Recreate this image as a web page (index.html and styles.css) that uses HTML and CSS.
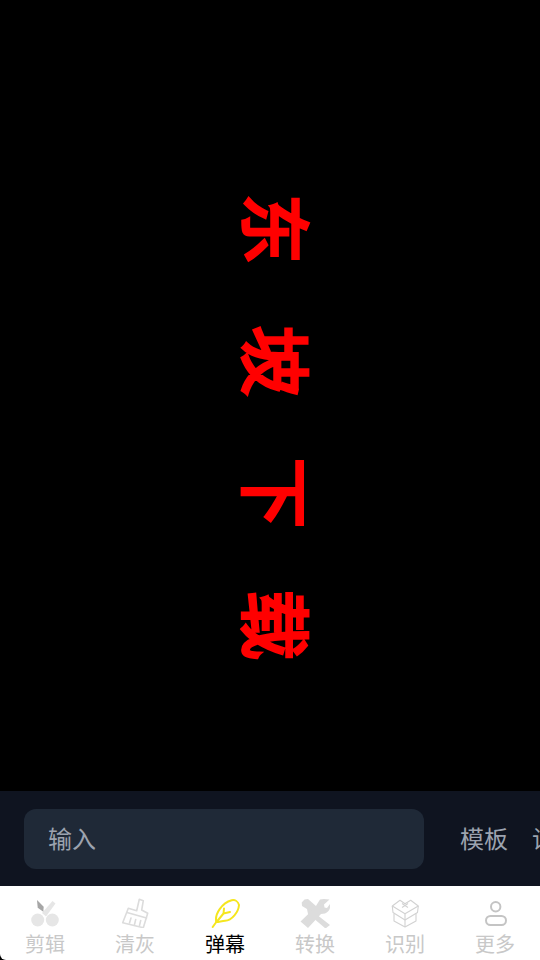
FILE: index.html
```html
<!DOCTYPE html>
<html lang="zh-CN">
<head>
<meta charset="utf-8">
<title>弹幕</title>
<link rel="stylesheet" href="styles.css">
</head>
<body>
<div class="app">
  <main class="stage"><div class="danmu">东坡下载</div></main>
  <section class="composer">
    <div class="field">输入</div>
    <div class="actions">
      <div class="action">模板</div>
      <div class="action">设置</div>
    </div>
  </section>
  <nav class="tabs">
    <div class="tab">
      <svg class="ico" viewBox="0 0 30 30"><path fill="#e6e6e6" d="M22.500 3l3 2.500L16 18.500 12 15z"/><circle cx="7.700" cy="22" r="6.500" fill="#e6e6e6"/><circle cx="22.300" cy="22" r="6.500" fill="#e6e6e6"/><path fill="#a6a6a6" d="M7 2l6.700 6.700-.4 5L7.700 9.700z"/></svg>
      <span>剪辑</span>
    </div>
    <div class="tab">
      <svg class="ico" viewBox="0 0 30 30" fill="none" stroke="#dcdcdc" stroke-width="1.600" stroke-linejoin="round" stroke-linecap="round"><path d="M19.300 1.300l4 1.400L21.700 12l6 3.300-4.400 14.400-20.600-5 5.600-14.400 8.400 2.400z"/><path d="M7 14.500l19.500 5.500M9.500 25l1.500-5M14.500 26.500l1.200-5M19.500 27.500l1.200-5"/></svg>
      <span>清灰</span>
    </div>
    <div class="tab active">
      <svg class="ico" viewBox="0 0 30 30" fill="none" stroke="#f5e61e" stroke-width="2" stroke-linejoin="round" stroke-linecap="round"><path d="M2.700 29l3.600-5"/><path d="M6.300 24C4.500 16 12 5 21.700 2.300 25 1.500 28 3.500 29 7c-.5 7-7 15.500-14 15.800-3 .2-6.500 1.200-8.700 1.200z"/><path d="M6.500 24L13.500 15.500M13.500 15.500l.5-5M13.500 15.500l6.500-1.500"/></svg>
      <span>弹幕</span>
    </div>
    <div class="tab">
      <svg class="ico" viewBox="0 0 30 30"><path fill="#dcdcdc" d="M1.700 4.500L4.500 1.500 8 1l8 7 4 4-4 4 14 11-4.500 3.500L12 19 8 16 7 11 2 8z"/><path fill="#dcdcdc" d="M20 1.500C23 .5 26 1 29.500 1.500L24 6.500l.5 3 2.500.5L30 6c1 4-1 8-5 9.500l-4 .5-13 14-7.500-6.500L15 9.500z"/></svg>
      <span>转换</span>
    </div>
    <div class="tab">
      <svg class="ico" viewBox="0 0 30 30" fill="none" stroke="#d2d2d2" stroke-width="1.100" stroke-linejoin="round"><path d="M2.300 8L10 2.300l5 3.400 5.700-3.400L28.300 8 15 15.700z"/><path d="M12 9.500l6-4M18 9.500l-6-4"/><path d="M2.300 8l.7 6.500L15 22l12.500-7.500.8-6.500"/><path d="M4 15.500V23l11 6 11-6v-7.500"/><path d="M15 15.700V29"/></svg>
      <span>识别</span>
    </div>
    <div class="tab">
      <svg class="ico" viewBox="0 0 30 30" fill="none" stroke="#c4c4c4" stroke-width="2"><circle cx="15.700" cy="8.700" r="4.700"/><rect x="6" y="18" width="20" height="9" rx="4.500"/></svg>
      <span>更多</span>
    </div>
  </nav>
</div>
</body>
</html>
```
FILE: styles.css
```css
* { box-sizing: border-box; }
html, body { margin: 0; height: 100%; background: #000; }
body { font-family: "Noto Sans CJK SC", "Noto Sans", sans-serif; }
.app { width: 540px; height: 960px; display: flex; flex-direction: column; overflow: hidden; }
.stage { flex: 1; min-height: 0; background: #000; display: flex; align-items: center; justify-content: center; padding: 125px 0 0 15px; }
.danmu { writing-mode: vertical-rl; text-orientation: sideways; color: #f00; font-size: 70px; font-weight: 400; -webkit-text-stroke: 3.5px #f00; letter-spacing: 62px; line-height: 1; white-space: nowrap; }
.composer { flex: none; height: 95px; background: #0f1420; display: flex; align-items: flex-start; padding: 18px 0 0 24px; gap: 36px; overflow: hidden; }
.field { flex: none; width: 400px; height: 60px; background: #1f2937; border-radius: 12px; color: #9ca3af; font-size: 24px; line-height: 58px; padding-left: 24px; }
.actions { flex: none; display: flex; gap: 24px; height: 60px; align-items: flex-start; }
.action { color: #9ca3af; font-size: 24px; line-height: 57px; white-space: nowrap; }
.tabs { flex: none; height: 74px; background: #fff; display: flex; border-bottom-left-radius: 6px; }
.tab { flex: 1; display: flex; flex-direction: column; align-items: center; padding-top: 12px; font-size: 20px; line-height: 30px; color: #c8c8c8; }
.tab.active { color: #000; }
.ico { width: 30px; height: 30px; display: block; flex: none; }
.tab span { display: block; margin-top: 1px; }
```
